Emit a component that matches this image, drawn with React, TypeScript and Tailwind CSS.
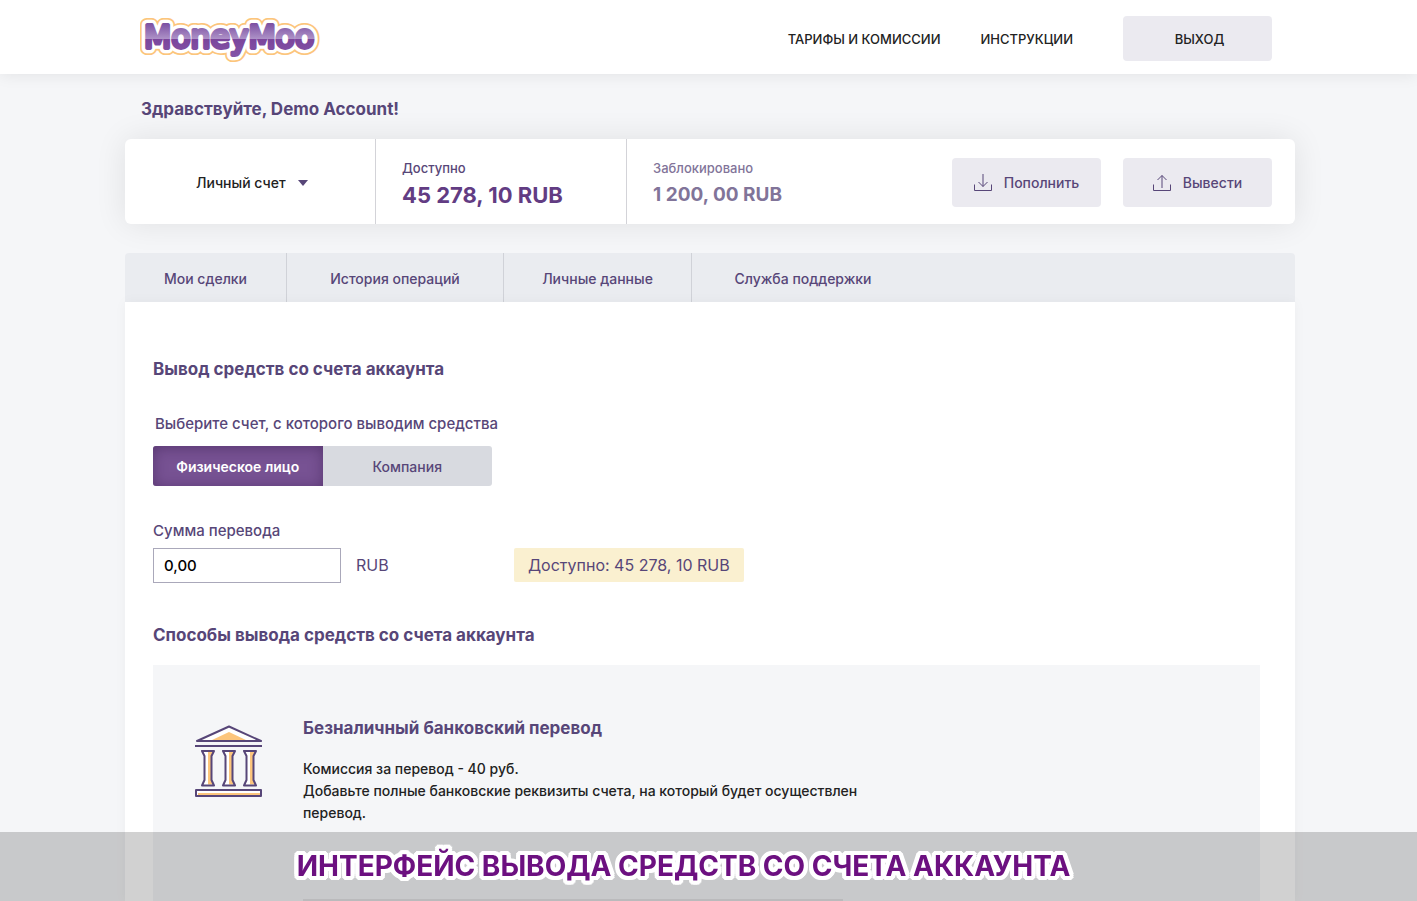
import { useState } from 'react'

const tabs = [
  { label: 'Мои сделки', width: 'w-[162px]' },
  { label: 'История операций', width: 'w-[217px]' },
  { label: 'Личные данные', width: 'w-[188px]' },
  { label: 'Служба поддержки', width: 'w-[222px]' },
]

const accounts = ['Физическое лицо', 'Компания']

function Logo() {
  const word = { x: 4, y: 33, fontFamily: 'DejaVu Sans, sans-serif', fontSize: 31.5 }
  return (
    <svg width="182" height="48" viewBox="0 0 182 48" role="img" aria-label="MoneyMoo">
      <defs>
        <linearGradient id="moo" gradientUnits="userSpaceOnUse" x1="0" y1="8" x2="0" y2="43">
          <stop offset="0" stopColor="#7b4fa1" />
          <stop offset="0.46" stopColor="#ae93c8" />
          <stop offset="0.46" stopColor="#7b459c" />
          <stop offset="1" stopColor="#8456a8" />
        </linearGradient>
      </defs>
      <g strokeLinejoin="round" strokeLinecap="round">
        <text {...word} fill="#fcc57c" stroke="#fcc57c" strokeWidth="14">MoneyMoo</text>
        <text {...word} fill="#fff" stroke="#fff" strokeWidth="10.4">MoneyMoo</text>
        <text {...word} fill="url(#moo)" stroke="url(#moo)" strokeWidth="3.8">MoneyMoo</text>
      </g>
    </svg>
  )
}

function TransferIcon({ up = false }: { up?: boolean }) {
  return (
    <svg width="18" height="18" viewBox="0 0 18 18" fill="none" stroke="#574678" strokeWidth="1">
      <path d="M.5 10.5v6h17v-6" />
      {up ? <path d="M9 14V1.5M4.5 6L9 1.5 13.5 6" /> : <path d="M9 0v12.5M4.5 8L9 12.5 13.5 8" />}
    </svg>
  )
}

function Column({ x }: { x: number }) {
  return (
    <g transform={`translate(${x} 0)`}>
      <path d="M1 26h12l-2.5 5v24l2.5 5.5H1l2.5-5.5V31z" fill="#fff" />
      <path d="M7 27h5l-2 4v24l2 4.5H7z" fill="#fcc57c" />
      <path d="M1 26h12l-2.5 5v24l2.5 5.5H1l2.5-5.5V31z" fill="none" stroke="#574678" strokeWidth="2" strokeLinejoin="round" />
    </g>
  )
}

function BankIcon() {
  return (
    <svg width="68" height="72" viewBox="0 0 68 72">
      <path d="M34 1.5L66 16H2z" fill="#fff" />
      <path d="M34 7l18 8.5H16z" fill="#fcc57c" />
      <path d="M34 1.5L66 16H2z" fill="none" stroke="#574678" strokeWidth="2" strokeLinejoin="round" />
      <path d="M0 21h67" stroke="#574678" strokeWidth="2" />
      <Column x={6} />
      <Column x={27} />
      <Column x={48} />
      <path d="M1 65h65v6H1z" fill="#fff" />
      <path d="M3 68h63v3H3z" fill="#fcc57c" />
      <path d="M1 65h65v6H1z" fill="none" stroke="#574678" strokeWidth="2" strokeLinejoin="round" />
    </svg>
  )
}

export default function App() {
  const [account, setAccount] = useState(accounts[0])
  const [amount, setAmount] = useState('0,00')

  return (
    <div className="flex min-h-screen flex-col bg-[#f5f6f8] font-['Inter','Noto_Sans',sans-serif] text-[#574678]">
      <header className="relative bg-white pl-[3px] shadow-[0_0_16px_rgba(0,0,0,0.09)]">
        <div className="mx-auto flex h-[74px] max-w-[1170px] items-center pr-[23px] pl-[15px]">
          <a href="#" className="mt-1"><Logo /></a>
          <nav className="mt-[6px] ml-auto flex gap-10 text-[13px] font-medium text-[#222] uppercase">
            <a href="#">Тарифы и комиссии</a>
            <a href="#">Инструкции</a>
          </nav>
          <button className="mt-[3px] ml-[50px] h-[45px] w-[149px] rounded bg-[#ebeaf0] pt-[2px] pl-1 text-[13px] font-medium text-[#222] uppercase">
            Выход
          </button>
        </div>
      </header>

      <main className="flex grow flex-col pl-[3px]">
        <div className="mx-auto flex w-full max-w-[1170px] grow flex-col">
          <p className="mt-[23px] pl-4 text-[17px] leading-6 font-bold">Здравствуйте, Demo Account!</p>

          <section className="mt-[18px] flex h-[85px] items-stretch rounded-md bg-white shadow-[0_0_32px_rgba(0,0,0,0.09)]">
            <div className="flex w-[251px] items-center justify-center border-r border-[#d3d3d8] pl-1">
              <div className="relative mt-[3px] flex items-center">
                <select aria-label="Счет" className="h-7 appearance-none pr-[22px] text-sm leading-7 font-medium text-[#222]">
                  <option>Личный счет</option>
                </select>
                <svg className="pointer-events-none absolute right-0" width="10" height="6" viewBox="0 0 10 6">
                  <path d="M0 0h10L5 6z" fill="#574678" />
                </svg>
              </div>
            </div>
            <div className="w-[251px] border-r border-[#d3d3d8] pt-[19px] pl-[26px]">
              <p className="text-[13px] leading-5 font-medium">Доступно</p>
              <p className="mt-[5px] text-[22px] leading-6 font-bold text-[#623c83]">45 278, 10 RUB</p>
            </div>
            <div className="pt-[19px] pl-[26px] opacity-75">
              <p className="text-[13px] leading-5 font-medium">Заблокировано</p>
              <p className="mt-[5px] text-[19px] leading-6 font-bold">1 200, 00 RUB</p>
            </div>
            <div className="ml-auto flex items-center gap-[22px] pt-[2px] pr-[23px]">
              <button className="flex h-[49px] w-[149px] items-center justify-center gap-3 rounded bg-[#ebeaf0] text-sm font-medium">
                <TransferIcon />
                Пополнить
              </button>
              <button className="flex h-[49px] w-[149px] items-center justify-center gap-3 rounded bg-[#ebeaf0] text-sm font-medium">
                <TransferIcon up />
                Вывести
              </button>
            </div>
          </section>

          <nav className="mt-[29px] flex h-[49px] rounded-t bg-[#eaecf0] text-sm font-medium">
            {tabs.map((tab, i) => (
              <a
                key={tab.label}
                href="#"
                className={`flex items-center justify-center pt-[3px] ${tab.width} ${i < tabs.length - 1 ? 'border-r border-[#d0d2d8]' : ''}`}
              >
                {tab.label}
              </a>
            ))}
          </nav>

          <section className="flex grow flex-col bg-white pr-[35px] pl-7 shadow-[0_0_12px_rgba(0,0,0,0.04)]">
            <h1 className="mt-[55px] text-[17px] leading-6 font-bold">Вывод средств со счета аккаунта</h1>
            <p className="mt-[31px] pl-[2px] text-[15px] leading-6 font-medium">Выберите счет, с которого выводим средства</p>
            <div className="mt-[10px] flex h-10 w-[339px] overflow-hidden rounded-[3px] bg-[#d8dae0] text-sm">
              {accounts.map((name) => (
                <button
                  key={name}
                  aria-pressed={account === name}
                  onClick={() => setAccount(name)}
                  className={`flex-1 pt-[2px] ${
                    account === name
                      ? 'bg-[#775293] font-semibold text-white shadow-[inset_0_2px_14px_rgba(60,30,80,0.5)]'
                      : 'font-medium'
                  }`}
                >
                  {name}
                </button>
              ))}
            </div>

            <label htmlFor="amount" className="mt-[33px] text-[15px] leading-6 font-medium">Сумма перевода</label>
            <div className="mt-[5px] flex items-start text-base leading-[34px]">
              <input
                id="amount"
                value={amount}
                onChange={(e) => setAmount(e.target.value)}
                className="h-[35px] w-[188px] border border-[#aaa8ba] bg-white px-[10px] text-[15px] font-medium text-black"
              />
              <span className="ml-[15px] w-[158px]">RUB</span>
              <span className="rounded-xs bg-[#faf0d0] px-[14px]">Доступно: 45 278, 10 RUB</span>
            </div>

            <h2 className="mt-10 text-[17px] leading-6 font-bold">Способы вывода средств со счета аккаунта</h2>
            <article className="mt-[18px] flex grow bg-[#f5f6f8] pl-[42px]">
              <div className="mt-[60px] w-[108px] shrink-0"><BankIcon /></div>
              <div className="flex flex-col pt-[51px]">
                <h3 className="text-[17px] leading-6 font-bold">Безналичный банковский перевод</h3>
                <p className="mt-[18px] max-w-[590px] text-sm leading-[22px] font-medium text-[#222]">
                  Комиссия за перевод - 40 руб.<br />
                  Добавьте полные банковские реквизиты счета, на который будет осуществлен перевод.
                </p>
                <div className="mt-auto w-[540px] border-b-2 border-[#e3e3e6]" />
              </div>
            </article>
          </section>
        </div>
      </main>

      <footer className="fixed inset-x-0 bottom-0 flex h-[69px] items-center justify-center bg-black/18 pr-[50px] pb-[2px]">
        <p className="text-[28px] leading-9 font-bold text-[#6c1080] uppercase [text-shadow:4px_0_#fff,-4px_0_#fff,0_4px_#fff,0_-4px_#fff,3px_3px_#fff,-3px_3px_#fff,3px_-3px_#fff,-3px_-3px_#fff,4px_2px_#fff,-4px_2px_#fff,4px_-2px_#fff,-4px_-2px_#fff,2px_4px_#fff,-2px_4px_#fff,2px_-4px_#fff,-2px_-4px_#fff]">
          Интерфейс вывода средств со счета аккаунта
        </p>
      </footer>
    </div>
  )
}
